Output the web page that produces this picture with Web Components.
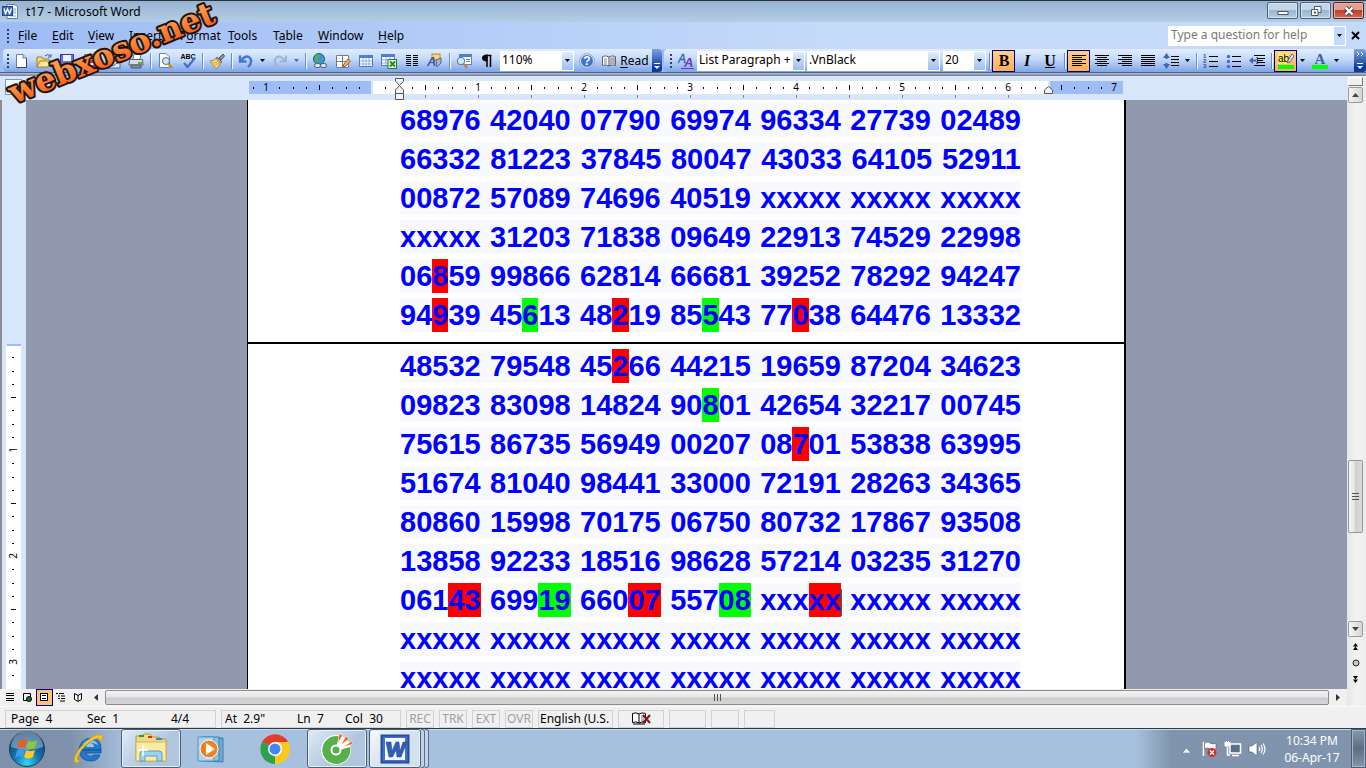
<!DOCTYPE html>
<html lang="en">
<head>
<meta charset="utf-8">
<title>t17 - Microsoft Word</title>
<style>
  html, body { height: 100%; }
  body {
    margin: 0;
    overflow: hidden;
    font-family: "Noto Sans", "Open Sans", sans-serif;
    font-size: 12px;
    color: #000;
  }
</style>
</head>
<body>
<word-app></word-app>

<script>
const define = (name, html, setup) => {
  const template = document.createElement('template');
  template.innerHTML = html;
  customElements.define(name, class extends HTMLElement {
    constructor() {
      super();
      this.attachShadow({ mode: 'open' });
      this.shadowRoot.appendChild(template.content.cloneNode(true));
    }
    connectedCallback() {
      if (setup) setup(this, this.shadowRoot);
    }
  });
};

const lines = (rows) => rows.map(([x1, x2, y]) => `<path d="M${x1} ${y}.5H${x2}" stroke="#000"/>`).join('');
const letter = (char, extra) => `<text x="8" y="13" text-anchor="middle" font-family="Liberation Serif, serif" font-size="16" font-weight="bold" ${extra || ''}>${char}</text>`;

// size of the square view box, then its content
const icons = {
  word: [16, `<path d="M5 .5H13L15.500 3V14.500H5Z" fill="#fff" stroke="#5b7db5"/><path d="M11 5H14M11 7H14M11 9H14M8 12H14" stroke="#7ca0d8"/><rect x=".5" y="2.500" width="10" height="9" fill="#3e69b8" stroke="#24458b"/><path d="M2 4.500L3.500 9.500L5.500 5L7.500 9.500L9.500 4.500" fill="none" stroke="#fff" stroke-width="1.400"/>`],
  new: [16, `<path d="M3.500 1.500H10L13.500 5V14.500H3.500Z" fill="#fff" stroke="#6a7fa5"/><path d="M10 1.500V5H13.500" fill="#c9d8f0" stroke="#6a7fa5"/><path d="M13.500 5V14.500H3.500" fill="none" stroke="#33456b"/>`],
  open: [16, `<path d="M1 14V4H6L7 6H13V8" fill="#f7d774" stroke="#a67c20"/><path d="M1 14L4 8H15.500L12 14Z" fill="#fce9a0" stroke="#a67c20"/><path d="M9 3Q12 0 14.500 3M15 1V4H12" fill="none" stroke="#38649c"/>`],
  save: [16, `<path d="M1.500 1.500H14.500V14.500H3L1.500 13Z" fill="#6c6fd6" stroke="#32379c"/><rect x="4" y="2" width="8" height="6" fill="#eef2fc"/><rect x="5" y="10" width="7" height="4" fill="#c9cdf3"/><rect x="6" y="11" width="2" height="3" fill="#32379c"/>`],
  perm: [16, `<path d="M2.500 1.500H11.500V14.500H2.500Z" fill="#fff" stroke="#6a7fa5"/><circle cx="11" cy="11" r="4.500" fill="#d43a24"/><path d="M8.500 11H13.500" stroke="#fff" stroke-width="2"/>`],
  mail: [16, `<path d="M4.500 1.500H11L13.500 4V12.500H4.500Z" fill="#fff" stroke="#6a7fa5"/><rect x="1" y="8" width="14" height="7" fill="#dfe7f5" stroke="#53688f"/><path d="M1 8L8 13L15 8" fill="none" stroke="#53688f"/>`],
  print: [16, `<path d="M5 6L6 1H13L12 6" fill="#fff" stroke="#62708c"/><path d="M1.500 6.500H14.500L15 12H1Z" fill="#d6dbe4" stroke="#586274"/><path d="M3 12H13V15H3Z" fill="#8a93a3" stroke="#485365"/><rect x="10" y="9" width="4" height="2" fill="#36c62a"/>`],
  preview: [16, `<path d="M2.500 .5H9L12.500 4V14.500H2.500Z" fill="#fff" stroke="#6a7fa5"/><circle cx="9" cy="8" r="3.500" fill="#cfe6f5" stroke="#566a86"/><path d="M11.500 11L15 15" stroke="#c88a2a" stroke-width="2.500"/>`],
  spell: [16, `<text x="8" y="6" text-anchor="middle" font-family="Liberation Sans, sans-serif" font-weight="bold" font-size="7">ABC</text><path d="M4 10L7.500 14L15 5" fill="none" stroke="#3f6fd0" stroke-width="2.200"/>`],
  brush: [16, `<path d="M10 5L14 1L15.500 3L12 7Z" fill="#8a94a8" stroke="#555"/><path d="M8 4L13 9L11 10L7 6Z" fill="#a7a7ae" stroke="#6d6650"/><path d="M1 8Q5 8 7 5.500L11.500 10Q9 15 7 15.500Z" fill="#f5dc7c" stroke="#a8882a"/><path d="M4 10L8 9M6 12L10 10" stroke="#c7a33b"/>`],
  undo: [16, `<path d="M2 2.500V8.500H8.500" fill="none" stroke="#3d76d8" stroke-width="2.400"/><path d="M3 8Q8 1 12 5Q15 9 10 14" fill="none" stroke="#3d76d8" stroke-width="2.400"/>`],
  redo: [16, `<path d="M14 2.500V8.500H7.500" fill="none" stroke="#9fb2d3" stroke-width="2"/><path d="M13 8Q8 1 4 5Q1 9 6 14" fill="none" stroke="#9fb2d3" stroke-width="2"/>`],
  link: [16, `<circle cx="7" cy="6" r="5.500" fill="#3d8fe0" stroke="#225a9b"/><path d="M4 2Q9 0 8 4L5 6L7 9L4 10Q1 6 4 2M10 4L12 6L10 9Z" fill="#44b843"/><rect x="2.500" y="10.500" width="6" height="4" rx="2" fill="#d9e1ec" stroke="#4d5a72"/><rect x="8.500" y="10.500" width="6" height="4" rx="2" fill="#d9e1ec" stroke="#4d5a72"/>`],
  borders: [16, `<path d="M1.500 2.500H13.500V14.500H1.500ZM7.500 2.500V14.500M1.500 8.500H13.500" fill="#fff" stroke="#6e7d98"/><path d="M8 14L9 11L13 6L15.500 8L11 13Z" fill="#f1b95a" stroke="#9c5a25"/>`],
  table: [16, `<rect x="1.500" y="2.500" width="13" height="11" fill="#fff" stroke="#527cc0"/><rect x="2" y="2" width="12" height="3" fill="#4d7fd6"/><path d="M2 8H14M2 11H14M5 5V13M8 5V13M11 5V13" stroke="#8daede"/>`],
  excel: [16, `<rect x=".5" y="1.500" width="13" height="11" fill="#fff" stroke="#527cc0"/><rect x="1" y="1" width="12" height="3" fill="#4d7fd6"/><path d="M1 7H13M1 10H13M5 4V12M9 4V12" stroke="#8daede"/><rect x="7" y="6.500" width="8.500" height="9" fill="#e5f4e0" stroke="#2d7b30"/><path d="M9 8.500L14 13.500M14 8.500L9 13.500" stroke="#21852b" stroke-width="1.800"/>`],
  columns: [16, [2, 4, 6, 8, 10, 12].map(y => lines([[2, 7, y], [9, 14, y]])).join('')],
  drawing: [16, `<rect x="5" y="1" width="8" height="6" fill="#f6d679" stroke="#b58b2a"/><path d="M9 7L14 5V10L10 14Z" fill="#aab4c6" stroke="#5c6780"/><text x="0" y="13" font-family="Liberation Sans, sans-serif" font-style="italic" font-weight="bold" font-size="13" fill="#3d57b5">A</text>`],
  docmap: [16, `<rect x="3.500" y="1.500" width="12" height="10" fill="#fff" stroke="#6783b0"/><rect x="4" y="1" width="11" height="3" fill="#4d7fd6"/><path d="M10 6.500H14M10 8.500H14" stroke="#777"/><circle cx="5" cy="8" r="3.700" fill="#c7edf0" stroke="#5c7797"/><path d="M8 11L11 15" stroke="#b98736" stroke-width="2.200"/>`],
  pilcrow: [16, `<path d="M8 14V2.500H12.500M11.500 2V14" fill="none" stroke="#000" stroke-width="1.500"/><path d="M8.500 1.500H7Q3 2 3 5Q3 8 7 8.500H8.500Z"/>`],
  help: [16, `<circle cx="8" cy="8" r="6.500" fill="#3f75d6" stroke="#fff"/><circle cx="8" cy="8" r="7.300" fill="none" stroke="#7a93c1" stroke-width=".8"/><text x="8" y="12" text-anchor="middle" font-family="Liberation Sans, sans-serif" font-weight="bold" font-size="12" fill="#fff">?</text>`],
  read: [16, `<path d="M1.500 3.500Q5 2 8 4Q11 2 14.500 3.500V12.500Q11 11 8 13Q5 11 1.500 12.500Z" fill="#fff" stroke="#5d6570"/><path d="M8 4V13" stroke="#444"/><path d="M9 5Q12 3.500 14 4.500V12Q11 10.500 9 12Z" fill="#a6b1c0"/><path d="M3 6H6M3 8H6M3 10H6" stroke="#888"/>`],
  styles: [16, `<text x="0" y="10" font-family="Liberation Sans, sans-serif" font-style="italic" font-size="12" fill="#2d62c0" stroke="#2d62c0" stroke-width=".4">A</text><text x="6" y="14" font-family="Liberation Sans, sans-serif" font-style="italic" font-weight="bold" font-size="13" fill="#6c3eb1">A</text><path d="M3 15.500H16" stroke="#6c3eb1"/>`],
  bold: [16, letter('B')],
  italic: [16, letter('I', 'font-style="italic"')],
  underline: [16, letter('U') + '<path d="M3 14.500H13" stroke="#000"/>'],
  left: [16, lines([[1, 15, 2], [1, 11, 4], [1, 15, 6], [1, 11, 8], [1, 15, 10], [1, 11, 12]])],
  center: [16, lines([[1, 15, 2], [3, 13, 4], [1, 15, 6], [3, 13, 8], [1, 15, 10], [3, 13, 12]])],
  right: [16, lines([[1, 15, 2], [5, 15, 4], [1, 15, 6], [5, 15, 8], [1, 15, 10], [5, 15, 12]])],
  justify: [16, lines([2, 4, 6, 8, 10, 12].map(y => [1, 15, y]))],
  spacing: [16, lines([[8, 16, 3], [8, 16, 6], [8, 16, 9], [8, 16, 12]]) + '<path d="M3.500 2V6M3.500 10V14" stroke="#3b68b8" stroke-width="2"/><path d="M0 5L3.500 0L7 5ZM0 11L3.500 16L7 11Z" fill="#3b68b8"/>'],
  numbers: [16, lines([[6, 15, 3], [6, 15, 8], [6, 15, 13]]) + [[1, 5], [2, 10], [3, 15]].map(([n, y]) => `<text x="0" y="${y}" font-family="Liberation Sans, sans-serif" font-size="6" font-weight="bold" fill="#2d4f9c">${n}</text>`).join('')],
  bullets: [16, lines([[6, 15, 3], [6, 15, 8], [6, 15, 13]]) + '<g fill="#456cc0"><circle cx="2.500" cy="3.500" r="1.700"/><circle cx="2.500" cy="8.500" r="1.700"/><circle cx="2.500" cy="13.500" r="1.700"/></g>'],
  indent: [16, lines([[5, 16, 2], [8, 16, 5], [8, 14, 7], [8, 16, 9], [5, 16, 12]]) + '<path d="M8 2V14" stroke="#000" stroke-dasharray="1 1"/><path d="M0 7.500L4 4V6.500H7V8.500H4V11Z" fill="#3b68b8"/>'],
  highlight: [16, `<rect x="0" y="0" width="10" height="11" fill="#ffef60"/><text x="0" y="9" font-family="Liberation Sans, sans-serif" font-size="10">ab</text><path d="M9 10L11 6L14 1L16 3L12 9Z" fill="#e6edf8" stroke="#596a88"/><rect x="0" y="12" width="16" height="4" fill="#0f0"/>`],
  fontcolor: [16, `<text x="8" y="11" text-anchor="middle" font-family="Liberation Serif, serif" font-size="15" font-weight="bold" fill="#3d5fa8">A</text><rect x="0" y="12" width="16" height="4" fill="#0f0"/>`],
  normalview: [15, lines([[3, 11, 3], [3, 11, 5], [3, 11, 8], [3, 11, 10]])],
  webview: [15, `<path d="M10.500 7V3.500H3.500V10.500H7" fill="none" stroke="#000"/><circle cx="9" cy="9" r="2.500" fill="#1c7a3a" stroke="#000"/>`],
  printview: [15, `<rect x="3.500" y="3.500" width="7" height="7" fill="#fff" stroke="#000"/><path d="M5 5.500H9M5 8.500H9" stroke="#000"/>`],
  outline: [15, `<path d="M2 3.500H4M5 3.500H10M4 6H6M7 6H11M4 8.500H6M7 8.500H11M6 11H11" stroke="#000"/>`],
  readview: [15, `<path d="M3.500 3.500L7 5.500L10.500 3.500V9.500L7 11.500L3.500 9.500ZM7 5V11" fill="#fff" stroke="#000"/>`],
  spellstate: [20, `<path d="M1.500 4.500Q5 3 8 5Q11 3 14.500 4.500V13.500Q11 12 8 14Q5 12 1.500 13.500Z" fill="#fff" stroke="#000"/><path d="M8 5V14M2 15H14" stroke="#000"/><path d="M10 7H13M10 9H13M10 11H13" stroke="#777"/><path d="M12 6L19 14M19 6L12 14" stroke="#8b1010" stroke-width="2"/>`],
  start: [38, `<defs><radialGradient id="o" cx=".5" cy=".9" r=".9"><stop offset="0" stop-color="#35d8f5"/><stop offset=".4" stop-color="#1675ad"/><stop offset="1" stop-color="#0c3a66"/></radialGradient></defs><circle cx="19" cy="19" r="17.500" fill="url(#o)" stroke="#1b3e62"/><path d="M3 17A16 16 0 0 1 35 17Q19 23 3 17" fill="#fff" opacity=".35"/><path d="M11 11Q15 8 19 10L17 18Q13 16 9 18Z" fill="#ee5a24"/><path d="M20 11Q24 13 29 10L27 18Q22 20 18 18Z" fill="#8cc63e"/><path d="M9 20Q13 18 17 20L15 27Q11 25 7 28Z" fill="#3f9be8"/><path d="M18 20Q22 22 27 20L25 27Q20 30 16 27Z" fill="#fcc62c"/>`],
  ie: [34, `<path d="M8 18H30Q31 7 20 6Q9 7 8 18Q9 29 20 29Q27 29 29 23H23Q20 26 16 23Q15 22 15 21H30V18Z" fill="#1f78cc" stroke="#11549b" stroke-width=".8"/><path d="M15 15Q16 11 20 11Q23 12 23 15Z" fill="#a9c3de"/><path d="M11 13Q15 7 21 8Q26 9 27 13Q18 8 11 13" fill="#7cc4f5"/><path d="M5 31Q0 28 9 16Q22 1 30 3Q34 5 29 11Q31 5 24 7Q12 13 7 24Q5 30 10 28Q7 31 5 31" fill="#f7c52d" stroke="#c8931a" stroke-width=".6"/>`],
  explorer: [34, `<path d="M2 8V4H8L10 2H16L18 5H25L27 7H32V29H2Z" fill="#f1d984" stroke="#b99a42"/><rect x="5" y="3" width="5" height="2" fill="#20a02c"/><rect x="14" y="4" width="4" height="2" fill="#d93025"/><rect x="22" y="6" width="6" height="2" fill="#2a8bd8"/><path d="M2 10H32V29H2Z" fill="#faeaa3" stroke="#cdb45c"/><path d="M6 29V22Q6 19 9 19H25Q28 19 28 22V29H23V24H11V29Z" fill="#9bd4ee" stroke="#5b9fc2"/><path d="M9 13V24M4 18H14" stroke="#fff" stroke-width="1.500"/>`],
  media: [34, `<path d="M10 5L28 6V30L10 29Z" fill="#71a9d3" stroke="#417fae"/><path d="M6 5H24V29H6Z" fill="#8fc0e0" stroke="#417fae"/><path d="M3 5H19V29H3Z" fill="#a9d3ee" stroke="#5794c0"/><circle cx="14" cy="17" r="9" fill="#f3801e" stroke="#fff"/><path d="M11 11L20 17L11 23Z" fill="#fff"/>`],
  chrome: [34, `<path d="M17 17L4.300 9.500A15 15 0 0 1 30 9.500Z" fill="#e23d2f"/><path d="M17 17L30 9.500A15 15 0 0 1 17 32Z" fill="#fbc91c"/><path d="M17 17L17 32A15 15 0 0 1 4.300 9.500Z" fill="#2fa04c"/><path d="M17 10H30L24 20L17 32L23 21Z" fill="#fbc91c"/><circle cx="17" cy="17" r="7" fill="#fff"/><circle cx="17" cy="17" r="5.500" fill="#4285f4"/>`],
  coccoc: [34, `<circle cx="16" cy="18" r="15" fill="#fff"/><path d="M20 4.500A14 14 0 1 0 30 15L21 17.500A5 5 0 1 1 16.500 13Z" fill="#57b04a"/><circle cx="16" cy="18" r="4.500" fill="#57b04a" stroke="#fff" stroke-width="2"/><path d="M18 11L19 2L23 3ZM21 13L26 4L29 7ZM23 15L32 9L33 12Z" fill="#f26a1b" stroke="#fff" stroke-width=".5"/>`],
  wordbig: [30, `<path d="M1.500 1.500H28.500V28.500H1.500Z" fill="#4371c6" stroke="#254d9b" stroke-width="2"/><path d="M5 4H25V26H5Z" fill="#f6f9ff"/><path d="M6 8H11L12 17L16 8H19L20 17L23 8H27L21 23H17L16 16L12.500 23H9Z" fill="#315fb7" stroke="#1d428d" stroke-width=".5"/>`],
  flag: [18, `<path d="M3.500 2V16" stroke="#fff" stroke-width="1.600"/><path d="M4.500 3Q8 1 10 3Q13 5 16 3V9Q13 11 10 9Q8 7 4.500 9Z" fill="#fff" stroke="#4a5568" stroke-width=".6"/><circle cx="12" cy="12.500" r="4.500" fill="#d92c25"/><path d="M10 10.500L14 14.500M14 10.500L10 14.500" stroke="#fff" stroke-width="1.500"/>`],
  network: [18, `<path d="M6 4H16.500V13H6Z" fill="#5b6f86" stroke="#fff" stroke-width="1.500"/><path d="M8 15.500H15M3.500 7V15H6" stroke="#fff" stroke-width="1.500" fill="none"/><path d="M1 2V6H6V2M2.500 1V4M4.500 1V4" fill="#fff" stroke="#fff"/>`],
  volume: [18, `<path d="M1 6H4L9 2V16L4 12H1Z" fill="#fff" stroke="#4a5568" stroke-width=".6"/><path d="M11 7Q12.500 9 11 11M13 5Q15.500 9 13 13M15 3.500Q19 9 15 14.500" fill="none" stroke="#fff" stroke-width="1.200"/>`],
};

define('ui-icon', `
<style>
:host { display: inline-block; flex: none; line-height: 0; }
svg { display: block; }
</style>`, (host, root) => {
  const [size, body] = icons[host.getAttribute('name')];
  root.innerHTML += `<svg width="${size}" height="${size}" viewBox="0 0 ${size} ${size}" fill="none" aria-hidden="true"><g fill="#000">${body}</g></svg>`;
});

define('tool-button', `
<style>
:host { display: block; flex: none; }
button {
  display: flex; align-items: center; justify-content: center; gap: 3px;
  box-sizing: border-box; width: 100%; min-width: 23px; height: 22px;
  padding: 0; border: 1px solid transparent; background: none;
  font: inherit; color: inherit;
}
:host([active]) button { border-color: #000080; background: linear-gradient(#ffd08c, #ffad58); }
:host([small]) button { width: 17px; min-width: 17px; height: 17px; }
:host([small][active]) button { background: #ffc274; }
</style>
<button type="button"><slot></slot></button>`, (host, root) => {
  const label = host.getAttribute('label');
  if (label) root.querySelector('button').setAttribute('aria-label', label);
  const icon = host.getAttribute('icon');
  if (icon) root.querySelector('button').insertAdjacentHTML('afterbegin', `<ui-icon name="${icon}"></ui-icon>`);
});

define('drop-arrow', `
<style>
:host { display: block; flex: none; }
button { display: grid; place-items: center; width: 11px; height: 22px; padding: 0; border: 0; background: none; }
svg { display: block; }
:host([faded]) svg { opacity: .5; }
:host([short]) button { height: 18px; }
</style>
<button type="button" aria-label="More"><svg width="5" height="3"><path d="M0 0H5L2.500 3Z"/></svg></button>`);

define('tool-sep', `
<style>
:host { display: block; flex: none; box-sizing: border-box; width: 6px; height: 16px; padding-left: 3px; }
div { width: 1px; height: 100%; background: #6a8ccb; border-right: 1px solid #f1f6ff; }
</style>
<div></div>`);

define('tool-grip', `
<style>
:host { display: block; flex: none; width: 2px; height: 14px;
  background: repeating-linear-gradient(#27417f 0 2px, transparent 2px 4px); }
</style>`);

define('combo-box', `
<style>
:host { display: grid; flex: none; grid-template-columns: 1fr 12px; height: 20px; background: #fff; }
select {
  grid-area: 1 / 1 / 2 / 3; width: 100%; height: 20px; padding: 0 14px 2px 2px;
  border: 0; appearance: none; background: none; font: inherit; color: inherit; overflow: hidden;
}
span { grid-area: 1 / 2; display: grid; place-items: center; margin: 1px 1px 1px 0;
  background: linear-gradient(#e1ecfc, #9dbdf0); pointer-events: none; }
</style>
<select></select>
<span><svg width="5" height="3"><path d="M0 0H5L2.500 3Z"/></svg></span>`, (host, root) => {
  const select = root.querySelector('select');
  select.setAttribute('aria-label', host.getAttribute('label'));
  select.add(new Option(host.getAttribute('value')));
});

define('title-bar', `
<style>
:host { display: flex; align-items: center; height: 21px; border-top: 1px solid #2e3238;
  padding: 0 2px 0 2px; background: linear-gradient(#97b3d2, #b4cde6); }
h1 { flex: 1; margin: 0 0 0 8px; font: inherit; line-height: 20px; }
.controls { display: flex; gap: 2px; align-self: flex-start; }
button { display: grid; place-items: center; width: 31px; height: 17px; margin-top: 1px; padding: 0; box-sizing: border-box;
  border: 1px solid #4c617b; border-radius: 2px; box-shadow: inset 0 0 0 1px #d5e3f2;
  background: linear-gradient(#c3d5e8 50%, #9db6d0 50%, #b3cbe2); }
.close { background: linear-gradient(#e0a090 50%, #c0402c 50%, #d26a50); border-color: #5c2018; box-shadow: inset 0 0 0 1px #e8b5a8; }
</style>
<ui-icon name="word"></ui-icon>
<h1>t17 - Microsoft Word</h1>
<div class="controls">
  <button type="button" aria-label="Minimize"><svg width="12" height="12"><rect x="1" y="6.500" width="10" height="3" fill="#fff" stroke="#4d5663"/></svg></button>
  <button type="button" aria-label="Restore"><svg width="12" height="12"><path d="M4.500 1.500H11V7.500H4.500Z" fill="#fff" stroke="#4d5663"/><path d="M1.500 4.500H8V10.500H1.500Z" fill="#fff" stroke="#4d5663"/><path d="M4 7.500H6" stroke="#4d5663" stroke-width="2"/></svg></button>
  <button type="button" class="close" aria-label="Close"><svg width="12" height="12"><path d="M2.500 2.500L9.500 9.500M9.500 2.500L2.500 9.500" stroke="#4a3b40" stroke-width="4"/><path d="M2.500 2.500L9.500 9.500M9.500 2.500L2.500 9.500" stroke="#fff" stroke-width="2.400"/></svg></button>
</div>`);

define('menu-bar', `
<style>
:host { display: flex; align-items: center; height: 27px; padding: 0 6px 0 7px; background: linear-gradient(90deg, #9ebcf5, #c4daf9 60%); }
nav { display: flex; flex: 1; margin-left: 9px; gap: 16px; }
button { padding: 0; border: 0; background: none; font: inherit; color: inherit; line-height: 18px; text-align: left; }
u { text-underline-offset: 2px; }
.help { display: flex; width: 178px; height: 20px; background: #fff; }
input { flex: 1; min-width: 0; padding: 0 3px 2px; border: 0; background: none; font: inherit; }
input::placeholder { color: #7a7a7a; opacity: 1; }
.help drop-arrow { background: #c4daf9; margin: 1px; }
.x { margin-left: 5px; line-height: 0; }
</style>
<tool-grip></tool-grip>
<nav>
  <button style="width:18px"><u>F</u>ile</button>
  <button style="width:20px"><u>E</u>dit</button>
  <button style="width:25px"><u>V</u>iew</button>
  <button style="width:35px"><u>I</u>nsert</button>
  <button style="width:32px">F<u>o</u>rmat</button>
  <button style="width:29px"><u>T</u>ools</button>
  <button style="width:29px">T<u>a</u>ble</button>
  <button style="width:44px"><u>W</u>indow</button>
  <button style="width:26px"><u>H</u>elp</button>
</nav>
<div class="help"><input type="text" aria-label="Help question" placeholder="Type a question for help"><drop-arrow short></drop-arrow></div>
<button type="button" class="x" aria-label="Close document"><svg width="9" height="9"><path d="M1 1L8 8M8 1L1 8" stroke="#000" stroke-width="2"/></svg></button>`);

define('tool-overflow', `
<style>
:host { display: block; flex: none; align-self: stretch; background: linear-gradient(#7da2e6, #0f3b9c 80%); border-radius: 0 3px 3px 0; }
button { display: flex; align-items: flex-end; justify-content: center; width: 10px; height: 100%; padding: 0 0 3px; border: 0; background: none; }
:host([wide]) button { width: 12px; }
</style>
<button type="button" aria-label="Toolbar options"><svg width="8" height="18"><path class="more" d="M1 1L3 3L1 5M5 1L7 3L5 5" fill="none" stroke="#fff"/><path d="M1 12.500H7" stroke="#fff"/><path d="M1 15H7L4 18Z" fill="#fff"/></svg></button>`, (host, root) => {
  if (!host.hasAttribute('wide')) root.querySelector('.more').remove();
});

define('tool-bars', `
<style>
:host { display: flex; height: 24px; background: #9ebcf5; border-bottom: 1px solid #3c62a8; box-sizing: border-box; }
div { display: flex; align-items: center; background: linear-gradient(#e1edfe, #c3d9fa 45%, #7fa4e6); }
.standard { margin-left: 3px; padding-left: 4px; border-radius: 4px 0 0 4px; }
.format { flex: 1; margin-left: 2px; padding-left: 6px; border-radius: 4px 0 0 4px; }
.format tool-grip { margin-right: 2px; }
.zoom { width: 74px; margin: 0 1px 0 2px; }
.style { width: 108px; }
.font { width: 133px; margin: 0 3px 0 2px; }
.size { width: 43px; }
.read { width: 54px; }
tool-overflow { margin-left: auto; }
u { text-underline-offset: 2px; }
</style>
<div class="standard">
  <tool-grip></tool-grip>
  <tool-button icon="new" label="New"></tool-button>
  <tool-button icon="open" label="Open"></tool-button>
  <tool-button icon="save" label="Save"></tool-button>
  <tool-button icon="perm" label="Permission"></tool-button>
  <tool-button icon="mail" label="E-mail"></tool-button>
  <tool-button icon="print" label="Print"></tool-button>
  <tool-sep></tool-sep>
  <tool-button icon="preview" label="Print preview"></tool-button>
  <tool-button icon="spell" label="Spelling"></tool-button>
  <tool-sep></tool-sep>
  <tool-button icon="brush" label="Format painter"></tool-button>
  <tool-sep></tool-sep>
  <tool-button icon="undo" label="Undo"></tool-button><drop-arrow></drop-arrow>
  <tool-button icon="redo" label="Redo"></tool-button><drop-arrow faded></drop-arrow>
  <tool-sep></tool-sep>
  <tool-button icon="link" label="Hyperlink"></tool-button>
  <tool-button icon="borders" label="Tables and borders"></tool-button>
  <tool-button icon="table" label="Insert table"></tool-button>
  <tool-button icon="excel" label="Insert worksheet"></tool-button>
  <tool-button icon="columns" label="Columns"></tool-button>
  <tool-button icon="drawing" label="Drawing"></tool-button>
  <tool-sep></tool-sep>
  <tool-button icon="docmap" label="Document map"></tool-button>
  <tool-button icon="pilcrow" label="Show marks"></tool-button>
  <combo-box class="zoom" label="Zoom" value="110%"></combo-box>
  <tool-button icon="help" label="Help"></tool-button>
  <tool-button class="read" icon="read"><span><u>R</u>ead</span></tool-button>
  <tool-overflow></tool-overflow>
</div>
<div class="format">
  <tool-grip></tool-grip>
  <tool-button icon="styles" label="Styles"></tool-button>
  <combo-box class="style" label="Style" value="List Paragraph + "></combo-box>
  <combo-box class="font" label="Font" value=".VnBlack"></combo-box>
  <combo-box class="size" label="Font size" value="20"></combo-box>
  <tool-sep></tool-sep>
  <tool-button icon="bold" label="Bold" active></tool-button>
  <tool-button icon="italic" label="Italic"></tool-button>
  <tool-button icon="underline" label="Underline"></tool-button>
  <tool-sep></tool-sep>
  <tool-button icon="left" label="Align left" active></tool-button>
  <tool-button icon="center" label="Center"></tool-button>
  <tool-button icon="right" label="Align right"></tool-button>
  <tool-button icon="justify" label="Justify"></tool-button>
  <tool-button icon="spacing" label="Line spacing"></tool-button><drop-arrow></drop-arrow>
  <tool-sep></tool-sep>
  <tool-button icon="numbers" label="Numbering"></tool-button>
  <tool-button icon="bullets" label="Bullets"></tool-button>
  <tool-button icon="indent" label="Decrease indent"></tool-button>
  <tool-sep></tool-sep>
  <tool-button icon="highlight" label="Highlight" active></tool-button><drop-arrow></drop-arrow>
  <tool-button icon="fontcolor" label="Font color"></tool-button><drop-arrow></drop-arrow>
  <tool-overflow wide></tool-overflow>
</div>`);

// one inch of the ruler at 110% zoom
const INCH = 106;

define('h-ruler', `
<style>
:host { display: flex; height: 24px; background: #d8e6fc; overflow: hidden; }
.corner { flex: none; box-sizing: border-box; width: 26px; padding: 3px 4px 5px 5px; }
.corner div { box-sizing: border-box; height: 16px; border: 1px solid #7b96cf; background: #f2f7ff; }
.scale { display: flex; flex: 1; justify-content: center; min-width: 0; }
svg { display: block; flex: none; }
text { font: 10px "Noto Sans", sans-serif; }
</style>
<div class="corner"><div></div></div>
<div class="scale"><svg width="879" height="24" shape-rendering="crispEdges"></svg></div>`, (host, root) => {
  const zero = 125;
  let out = `<rect x="2" y="5" width="122" height="13" fill="#9ebcf5"/><rect x="126" y="5" width="675" height="13" fill="#fff"/><rect x="803" y="5" width="73" height="13" fill="#9ebcf5"/>`;
  for (let i = -9; i <= 56; i++) {
    const x = Math.round(zero + i * INCH / 8);
    if (i === 0 || i === 2 || i === 51) continue;
    if (i % 8 === 0) out += `<text x="${x}" y="15" text-anchor="middle">${Math.abs(i / 8)}</text>`;
    else if (i % 4 === 0) out += `<rect x="${x}" y="9" width="1" height="5"/>`;
    else out += `<rect x="${x}" y="11" width="1" height="2"/>`;
    if (i > 0 && i < 50 && i % 4 === 0) out += `<rect x="${x}" y="19" width="1" height="3" fill="#7d8694"/>`;
  }
  out += `<g fill="#f4f4f4" stroke="#555" shape-rendering="auto"><path d="M148.500 2.500H156.500V5L152.500 9.500L148.500 5ZM152.500 9.500L156.500 14V17.500H148.500V14Z"/><path d="M148.500 17.500H156.500V23.500H148.500Z"/><path d="M797.500 17.500V14L801.500 10.500L805.500 14V17.500Z"/></g>`;
  root.querySelector('svg').innerHTML = out;
});

define('v-ruler', `
<style>
:host { display: block; flex: none; width: 24px; border-left: 2px solid #8b8d90; box-sizing: content-box; background: #d8e6fc; overflow: hidden; }
svg { display: block; }
text { font: 10px "Noto Sans", sans-serif; }
</style>
<svg width="24" height="800" shape-rendering="crispEdges"></svg>`, (host, root) => {
  const zero = 244;
  let out = `<rect x="5" y="244" width="14" height="2" fill="#9ebcf5"/><rect x="4" y="246" width="15" height="560" fill="#fff"/>`;
  for (let i = 1; i <= 25; i++) {
    const y = Math.round(zero + i * INCH / 8);
    if (i % 8 === 0) out += `<text transform="translate(15 ${y}) rotate(-90)" text-anchor="middle">${i / 8}</text>`;
    else if (i % 4 === 0) out += `<rect x="9" y="${y}" width="5" height="1"/>`;
    else out += `<rect x="10" y="${y}" width="2" height="1"/>`;
  }
  root.querySelector('svg').innerHTML = out;
});

// {r..} marks a red run, {g..} a green one, | is the insertion point
define('doc-line', `
<style>
:host { display: flex; justify-content: space-between; height: 34px; line-height: 34px; background: #f8f9fc; white-space: nowrap; }
mark { display: inline-block; height: 34px; color: inherit; }
.r { background: #f00; }
.g { background: #0f0; }
i { display: inline-block; width: 1px; height: 27px; margin-right: -1px; vertical-align: middle; background: #008080; }
</style>`, (host, root) => {
  for (const group of host.getAttribute('text').split(' ')) {
    const span = document.createElement('span');
    span.innerHTML = group
      .replace(/\{(\w)(\w+)\}/g, '<mark class="$1">$2</mark>')
      .replace('|', '<i></i>');
    root.append(span, ' ');
  }
});

define('doc-page', `
<style>
:host {
  display: block; box-sizing: border-box; width: 879px; height: 100%; margin: 0 auto;
  border: solid #000; border-width: 0 2px 0 1px; background: #fff; overflow: hidden;
  font: bold 29px "Liberation Sans", Arial, sans-serif; color: #00f;
}
section { display: flex; flex-direction: column; gap: 5px; padding: 3px 103px 10px 152px; }
section + section { border-top: 2px solid #000; padding-top: 5px; }
</style>`, (host, root) => {
  const pages = [[
    '68976 42040 07790 69974 96334 27739 02489',
    '66332 81223 37845 80047 43033 64105 52911',
    '00872 57089 74696 40519 xxxxx xxxxx xxxxx',
    'xxxxx 31203 71838 09649 22913 74529 22998',
    '06{r8}59 99866 62814 66681 39252 78292 94247',
    '94{r9}39 45{g6}13 48{r2}19 85{g5}43 77{r0}38 64476 13332',
  ], [
    '48532 79548 45{r2}66 44215 19659 87204 34623',
    '09823 83098 14824 90{g8}01 42654 32217 00745',
    '75615 86735 56949 00207 08{r7}01 53838 63995',
    '51674 81040 98441 33000 72191 28263 34365',
    '80860 15998 70175 06750 80732 17867 93508',
    '13858 92233 18516 98628 57214 03235 31270',
    '061{r43} 699{g19} 660{r07} 557{g08} xxx{rxx}| xxxxx xxxxx',
    'xxxxx xxxxx xxxxx xxxxx xxxxx xxxxx xxxxx',
    'xxxxx xxxxx xxxxx xxxxx xxxxx xxxxx xxxxx',
  ]];
  root.innerHTML += pages.map(page => `<section>${page.map(t => `<doc-line text="${t}"></doc-line>`).join('')}</section>`).join('');
});

define('v-scroll', `
<style>
:host { display: flex; flex-direction: column; align-items: stretch; flex: none; width: 15px; padding: 1px 3px 0 1px; background: linear-gradient(90deg, #e6e6e6, #f3f3f3 50%, #ececec); }
button { display: grid; place-items: center; flex: none; width: 100%; height: 16px; padding: 0; box-sizing: border-box; border: 0; background: none; }
.split { height: 9px; background: #f0f0f0; border: 1px solid #777; border-top-color: #fff; border-left-color: #fff; }
.box { border: 1px solid #9a9a9a; border-radius: 2px; margin-top: 1px; background: linear-gradient(90deg, #f5f5f5, #d5d5d5); }
.track { display: flex; flex-direction: column; flex: 1; }
.track::before { content: ""; flex: 359; }
.track::after { content: ""; flex: 88; }
.thumb { flex: 71; border: 1px solid #979797; border-radius: 2px; background: linear-gradient(90deg, #f5f5f5, #e4e4e4 45%, #cfcfd1 50%, #dcdcdc); }
footer { display: flex; flex-direction: column; height: 69px; padding-top: 2px; box-sizing: border-box; }
</style>
<button class="split" type="button" aria-label="Split"></button>
<button class="box" type="button" aria-label="Scroll up"><svg width="7" height="4"><path d="M0 4H7L3.500 0Z" fill="#444"/></svg></button>
<div class="track"><button class="thumb" type="button" aria-label="Scroll thumb"><svg width="7" height="9"><path d="M0 1.500H7M0 4.500H7M0 7.500H7" stroke="#555"/></svg></button></div>
<button class="box" type="button" aria-label="Scroll down"><svg width="7" height="4"><path d="M0 0H7L3.500 4Z" fill="#444"/></svg></button>
<footer>
  <button type="button" aria-label="Previous page"><svg width="7" height="8"><path d="M1 3.500L3.500 0L6 3.500ZM1 7L3.500 3.500L6 7Z"/></svg></button>
  <button type="button" aria-label="Browse object"><svg width="8" height="8"><circle cx="4" cy="4" r="3" fill="#c9c9c9" stroke="#222"/></svg></button>
  <button type="button" aria-label="Next page"><svg width="7" height="8"><path d="M1 1L3.500 4.500L6 1ZM1 4.500L3.500 8L6 4.500Z"/></svg></button>
</footer>`);

define('view-row', `
<style>
:host { display: flex; align-items: center; height: 17px; padding-left: 2px; background: #f0f0f0; }
.arrow { width: 18px; height: 17px; padding: 0; border: 0; background: none; }
.thumb { display: grid; place-items: center; flex: 1; height: 15px; padding: 0; border: 1px solid #8c8c8c; border-radius: 2px; background: linear-gradient(#f3f3f3, #e6e6e6 45%, #cbcbce 55%, #d6d6d8); }
svg { display: block; margin: auto; }
</style>
<tool-button small icon="normalview" label="Normal view"></tool-button>
<tool-button small icon="webview" label="Web layout"></tool-button>
<tool-button small active icon="printview" label="Print layout"></tool-button>
<tool-button small icon="outline" label="Outline"></tool-button>
<tool-button small icon="readview" label="Reading layout"></tool-button>
<button type="button" class="arrow" aria-label="Scroll left"><svg width="4" height="7"><path d="M4 0V7L0 3.500Z" fill="#333"/></svg></button>
<button type="button" class="thumb" aria-label="Scroll thumb"><svg width="9" height="7"><path d="M1.500 0V7M4.500 0V7M7.500 0V7" stroke="#555"/></svg></button>
<button type="button" class="arrow" aria-label="Scroll right"><svg width="4" height="7"><path d="M0 0V7L4 3.500Z" fill="#333"/></svg></button>`);

define('status-bar', `
<style>
:host { display: flex; align-items: center; gap: 5px; height: 22px; padding: 2px 5px 0; box-sizing: border-box; background: #f0f0f0; border-top: 1px solid #fafafa; }
div { display: flex; align-items: center; flex: none; box-sizing: border-box; height: 18px; border: 1px solid #d2d2d2; white-space: nowrap; line-height: 16px; }
.pos { width: 211px; padding-left: 5px; }
.at { width: 180px; padding-left: 3px; }
.off { width: 28px; justify-content: center; color: #a0a0a0; }
.lang { width: 75px; padding-left: 1px; }
.spell { width: 46px; justify-content: center; }
.w76 { width: 76px; } .w84 { width: 84px; } .w72 { width: 72px; } .w48 { width: 48px; }
.e1 { width: 37px; } .e2 { width: 28px; } .e3 { width: 31px; }
</style>
<div class="pos"><span class="w76">Page&nbsp; 4</span><span class="w84">Sec&nbsp; 1</span><span>4/4</span></div>
<div class="at"><span class="w72">At&nbsp; 2.9"</span><span class="w48">Ln&nbsp; 7</span><span>Col&nbsp; 30</span></div>
<div class="off">REC</div>
<div class="off">TRK</div>
<div class="off">EXT</div>
<div class="off">OVR</div>
<div class="lang">English (U.S.</div>
<div class="spell"><ui-icon name="spellstate"></ui-icon></div>
<div class="e1"></div>
<div class="e2"></div>
<div class="e3"></div>`);

define('task-button', `
<style>
:host { display: block; flex: none; width: 62px; height: 39px; }
button { display: grid; place-items: center; box-sizing: border-box; width: 100%; height: 100%; padding: 0; border: 0; background: none; }
:host([open]) button { border: 1px solid #4a5e78; border-radius: 3px; box-shadow: inset 0 0 0 1px #e6f0fa; background: linear-gradient(135deg, #dfeaf5, #b0c6df 60%); }
:host([front]) button { background: linear-gradient(135deg, #f4f8fc, #d3e0ee 60%); }
</style>
<button type="button"></button>`, (host, root) => {
  const button = root.querySelector('button');
  button.setAttribute('aria-label', host.getAttribute('label'));
  button.innerHTML = `<ui-icon name="${host.getAttribute('icon')}"></ui-icon>`;
});

define('task-bar', `
<style>
:host {
  display: flex; align-items: center; height: 40px; box-sizing: border-box; border-top: 1px solid #2c3a4a;
  box-shadow: inset 0 1px #c7daec;
  background: linear-gradient(90deg, rgba(127,145,170,1) 0, rgba(127,145,170,1) 70px, rgba(127,145,170,0) 125px),
    linear-gradient(270deg, #8095ad 0, #8095ad 195px, #a6c0dd 230px);
}
.start { width: 54px; }
.ie { width: 67px; }
.explorer, .coccoc { width: 60px; }
.chrome { width: 64px; }
.word { width: 52px; margin-left: 2px; }
.stack { width: 3px; height: 37px; border: 1px solid #5a6f8a; border-left: 0; border-radius: 0 3px 3px 0; background: #c2d3e6; }
.tray { display: flex; align-items: center; gap: 6px; margin-left: auto; color: #fff; }
.up { width: 16px; height: 20px; padding: 0; border: 0; background: none; }
time { display: block; width: 64px; margin: 0 1px 0 8px; line-height: 17px; text-align: center; white-space: pre-line; }
.desk { width: 15px; height: 39px; padding: 0; border: 1px solid #4d6077; box-shadow: inset 0 0 0 1px #a6b7c9; background: linear-gradient(#8798ac, #5c6e84 50%, #8496aa); }
</style>
<task-button class="start" icon="start" label="Start"></task-button>
<task-button class="ie" icon="ie" label="Internet Explorer"></task-button>
<task-button class="explorer" icon="explorer" label="Explorer" open></task-button>
<task-button class="media" icon="media" label="Media Player"></task-button>
<task-button class="chrome" icon="chrome" label="Chrome"></task-button>
<task-button class="coccoc" icon="coccoc" label="Browser" open></task-button>
<task-button class="word" icon="wordbig" label="Word" open front></task-button>
<span class="stack"></span><span class="stack"></span>
<div class="tray">
  <button class="up" type="button" aria-label="Hidden icons"><svg width="9" height="5"><path d="M0 5H9L4.500 0Z" fill="#fff" stroke="#4a5568" stroke-width=".5"/></svg></button>
  <ui-icon name="flag"></ui-icon>
  <ui-icon name="network"></ui-icon>
  <ui-icon name="volume"></ui-icon>
  <time>10:34 PM
06-Apr-17</time>
  <button class="desk" type="button" aria-label="Show desktop"></button>
</div>`);

define('site-mark', `
<style>
:host { display: block; position: absolute; left: 0; top: 0; pointer-events: none; }
svg { display: block; }
text {
  font: bold 32px "DejaVu Serif", serif; fill: url(#fire); stroke: #1b1410; stroke-width: 4px;
  paint-order: stroke; stroke-linejoin: round;
}
</style>
<svg width="240" height="120">
  <defs><linearGradient id="fire" x1="0" y1="0" x2="0" y2="1"><stop offset=".3" stop-color="#ff9a4a"/><stop offset=".8" stop-color="#f9641c"/></linearGradient></defs>
  <text transform="translate(14 104) rotate(-22)">webxoso.net</text>
</svg>`);

define('word-app', `
<style>
:host { display: flex; flex-direction: column; height: 100vh; position: relative; }
.edge { height: 3px; background: linear-gradient(#b9c4d6, #77797d); }
.work { display: flex; flex: 1; min-height: 0; }
.left { display: flex; flex-direction: column; flex: 1; min-width: 0; }
.canvas { display: flex; flex: 1; min-height: 0; }
main { flex: 1; min-width: 0; background: #9099ae; overflow: hidden; }
</style>
<title-bar></title-bar>
<menu-bar></menu-bar>
<tool-bars></tool-bars>
<div class="edge"></div>
<div class="work">
  <div class="left">
    <h-ruler></h-ruler>
    <div class="canvas">
      <v-ruler></v-ruler>
      <main><doc-page></doc-page></main>
    </div>
    <view-row></view-row>
  </div>
  <v-scroll></v-scroll>
</div>
<status-bar></status-bar>
<task-bar></task-bar>
<site-mark></site-mark>`);
</script>
</body>
</html>
